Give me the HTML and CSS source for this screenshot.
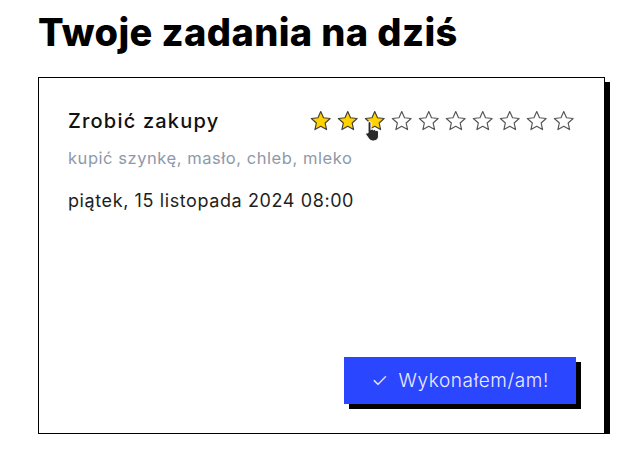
FILE: index.html
```html
<!DOCTYPE html>
<html lang="pl">
<head>
<meta charset="utf-8">
<link rel="stylesheet" href="styles.css">
</head>
<body>
<main class="page">
  <h1 class="title">Twoje zadania na dziś</h1>
  <section class="card">
    <div class="card-head">
      <h2 class="task-name">Zrobić zakupy</h2>
      <div class="stars">
        <svg class="star filled" viewBox="0 0 24 24"><path d="M12 1.8l3.1 6.9 7.4.8-5.6 5 1.6 7.4L12 18.1 5.5 21.9l1.6-7.4-5.6-5 7.4-.8z"/></svg>
        <svg class="star filled" viewBox="0 0 24 24"><path d="M12 1.8l3.1 6.9 7.4.8-5.6 5 1.6 7.4L12 18.1 5.5 21.9l1.6-7.4-5.6-5 7.4-.8z"/></svg>
        <span class="star-wrap">
          <svg class="star filled" viewBox="0 0 24 24"><path d="M12 1.8l3.1 6.9 7.4.8-5.6 5 1.6 7.4L12 18.1 5.5 21.9l1.6-7.4-5.6-5 7.4-.8z"/></svg>
          <svg class="cursor" viewBox="0 0 18 24"><path d="M5.2 1.6c.9 0 1.6.7 1.6 1.6v7.1c.4-.3.9-.5 1.4-.4.6.1 1.1.4 1.3.9.4-.3.9-.4 1.4-.3.6.1 1.1.5 1.3 1 .4-.2.9-.3 1.3-.2.9.2 1.5 1 1.5 1.900v4.6c0 2.8-2.2 5-5 5H8.5c-1.6 0-3-.8-3.9-2L1.4 16.3c-.5-.7-.4-1.6.2-2.1.6-.5 1.500-.5 2.1.1l-.1-.1V3.2c0-.9.7-1.6 1.6-1.6z"/></svg>
        </span>
        <svg class="star" viewBox="0 0 24 24"><path d="M12 1.8l3.1 6.9 7.4.8-5.6 5 1.6 7.4L12 18.1 5.5 21.9l1.6-7.4-5.6-5 7.4-.8z"/></svg>
        <svg class="star" viewBox="0 0 24 24"><path d="M12 1.8l3.1 6.9 7.4.8-5.6 5 1.6 7.4L12 18.1 5.5 21.9l1.6-7.4-5.6-5 7.4-.8z"/></svg>
        <svg class="star" viewBox="0 0 24 24"><path d="M12 1.8l3.1 6.9 7.4.8-5.6 5 1.6 7.4L12 18.1 5.5 21.9l1.6-7.4-5.6-5 7.4-.8z"/></svg>
        <svg class="star" viewBox="0 0 24 24"><path d="M12 1.8l3.1 6.9 7.4.8-5.6 5 1.6 7.4L12 18.1 5.5 21.9l1.6-7.4-5.6-5 7.4-.8z"/></svg>
        <svg class="star" viewBox="0 0 24 24"><path d="M12 1.8l3.1 6.9 7.4.8-5.6 5 1.6 7.4L12 18.1 5.5 21.9l1.6-7.4-5.6-5 7.4-.8z"/></svg>
        <svg class="star" viewBox="0 0 24 24"><path d="M12 1.8l3.1 6.9 7.4.8-5.6 5 1.6 7.4L12 18.1 5.5 21.9l1.6-7.4-5.6-5 7.4-.8z"/></svg>
        <svg class="star" viewBox="0 0 24 24"><path d="M12 1.8l3.1 6.9 7.4.8-5.6 5 1.6 7.4L12 18.1 5.5 21.9l1.6-7.4-5.6-5 7.4-.8z"/></svg>
      </div>
    </div>
    <p class="desc">kupić szynkę, masło, chleb, mleko</p>
    <p class="date">piątek, 15 listopada 2024 08:00</p>
    <button class="done" type="button"><span class="check">✓</span>Wykonałem/am!</button>
  </section>
</main>
</body>
</html>
```

FILE: styles.css
```css
* { box-sizing: border-box; }
html, body { margin: 0; padding: 0; background: #fff; }
body { font-family: "Inter", "Noto Sans", sans-serif; color: #111; }

.page { padding: 9px 0 0 38px; width: 618px; }

.title {
  margin: 0 0 21px 0;
  font-size: 38px;
  line-height: 47px;
  font-weight: 800;
  letter-spacing: 0.4px;
  color: #000;
}

.card {
  width: 567px;
  height: 357px;
  border: 1px solid #000;
  box-shadow: 5px 5px 0 #000;
  padding: 30px 28px 29px 29px;
  display: flex;
  flex-direction: column;
}

.card-head {
  display: flex;
  justify-content: space-between;
  align-items: center;
}

.task-name {
  margin: 0;
  font-size: 20px;
  line-height: 26px;
  font-weight: 500;
  letter-spacing: 1.2px;
  color: #111;
}

.stars { display: flex; gap: 5.5px; align-items: center; margin-right: 2px; }
.star-wrap { position: relative; display: flex; }
.star { width: 21.5px; height: 21.5px; display: block; }
.star path { fill: #fff; stroke: #555; stroke-width: 1.3; stroke-linejoin: round; }
.star.filled path { fill: #ffd200; stroke: #444035; }

.cursor {
  position: absolute;
  left: 0;
  top: 10px;
  width: 18px;
  height: 22px;
}
.cursor path { fill: #2a2a2a; stroke: #fff; stroke-width: 1.1; }

.desc {
  margin: 13px 0 0 0;
  font-size: 16.5px;
  line-height: 22px;
  letter-spacing: 0.55px;
  color: #8e99a8;
  font-weight: 400;
}

.date {
  margin: 20px 0 0 0;
  font-size: 18px;
  line-height: 24px;
  letter-spacing: 0.6px;
  color: #1e1e1e;
  font-weight: 400;
}

.done {
  margin-top: auto;
  align-self: flex-end;
  width: 232px;
  height: 47px;
  border: 0;
  border-radius: 0;
  background: #2b46ff;
  color: #ececff;
  font-family: "Inter", "Noto Sans", sans-serif;
  font-size: 19px;
  font-weight: 300;
  letter-spacing: 0.6px;
  box-shadow: 5px 5px 0 #000;
  display: flex;
  align-items: center;
  justify-content: center;
  gap: 10px;
  padding: 0;
}
.check { font-size: 19px; font-weight: 300; }
```
